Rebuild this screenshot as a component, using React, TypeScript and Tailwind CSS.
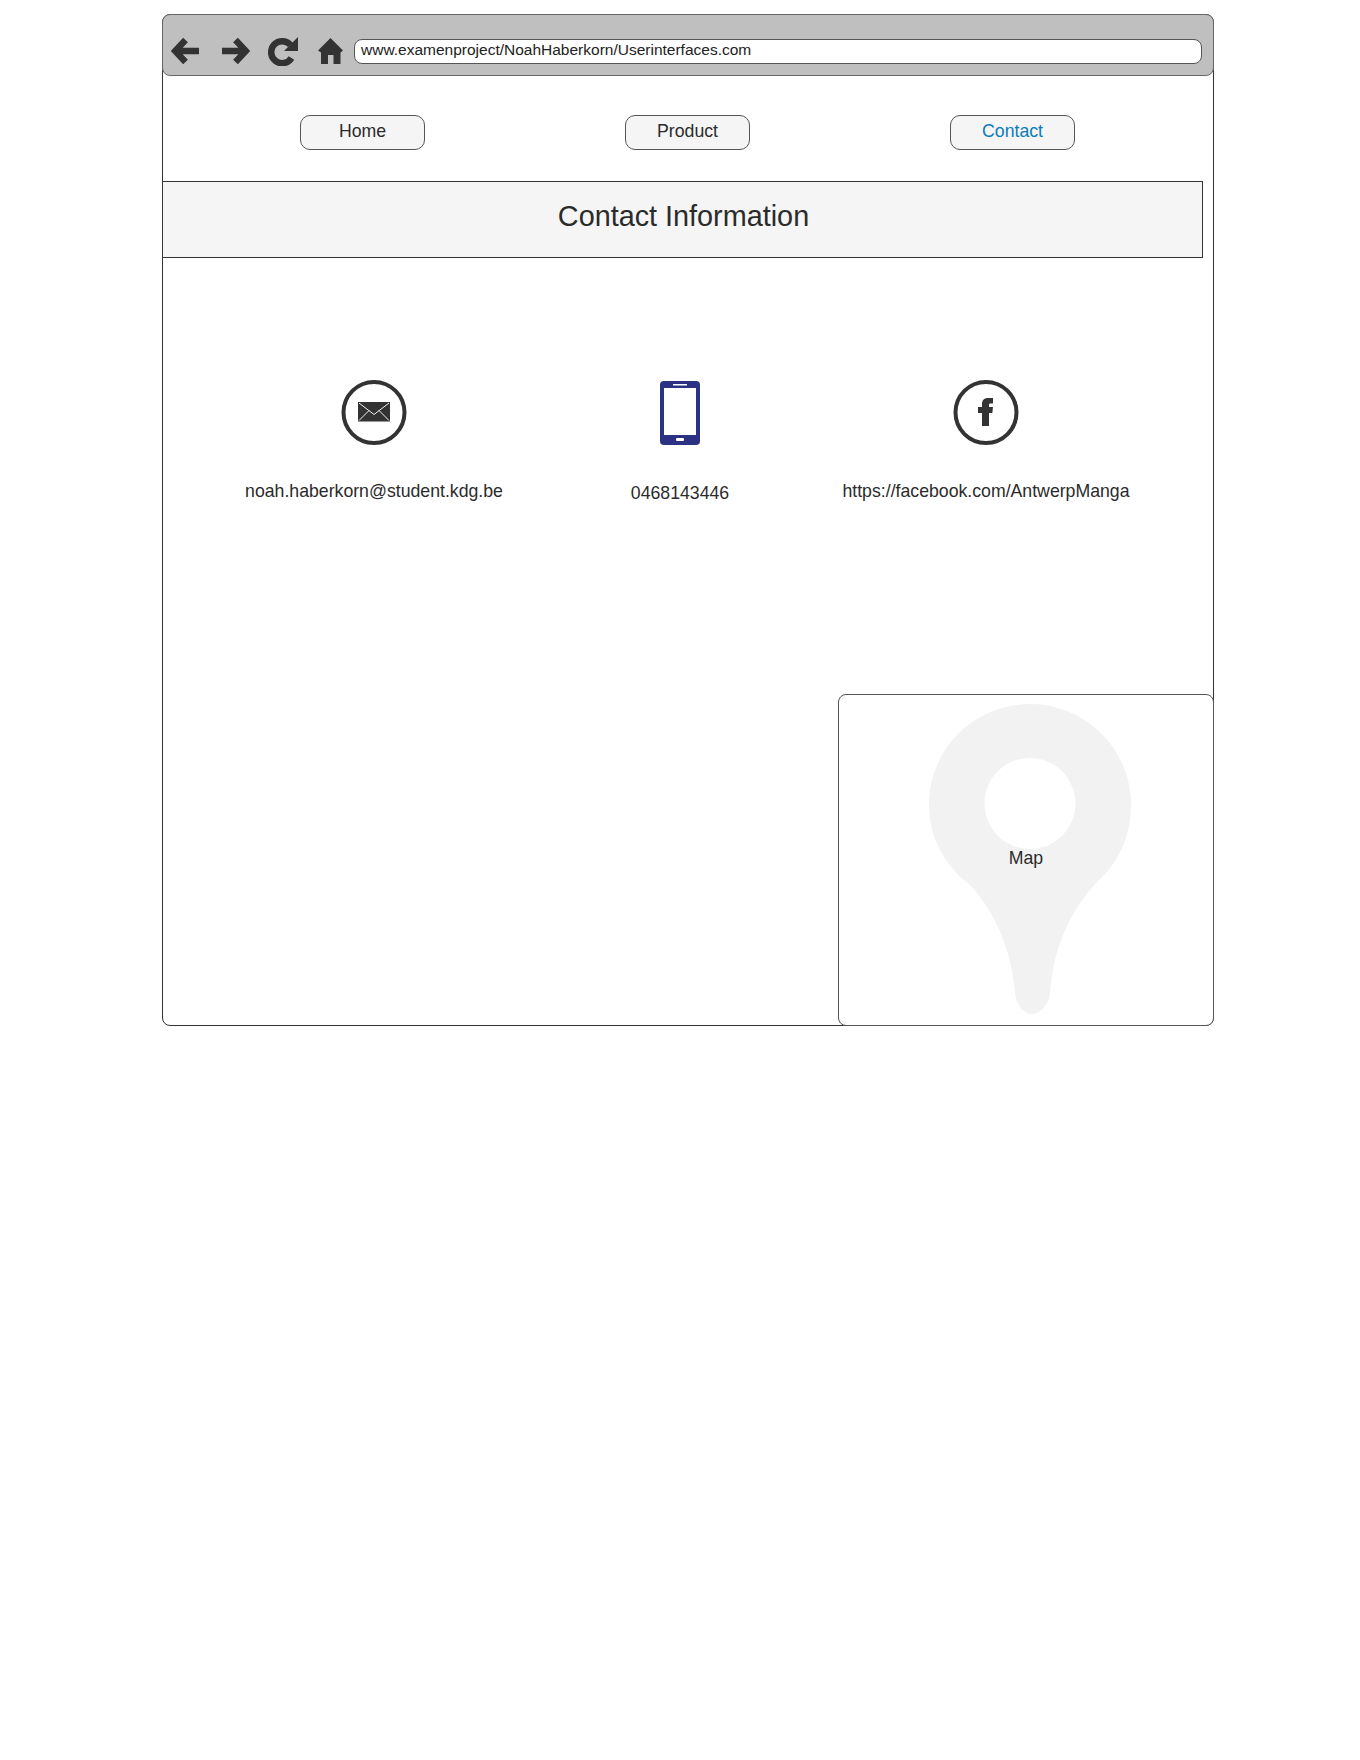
import React from 'react';

const navItems = [
  { label: 'Home', color: 'text-[#2b2b2b]' },
  { label: 'Product', color: 'text-[#2b2b2b]' },
  { label: 'Contact', color: 'text-[#0c7cba]' },
];

function BackIcon() {
  return (
    <svg width="28" height="28" viewBox="0 0 28 28" className="shrink-0">
      <path d="M28 14H6M14.500 3 4.200 14 14.500 25" fill="none" stroke="#333333" strokeWidth="6.500" />
    </svg>
  );
}

function ForwardIcon() {
  return (
    <svg width="28" height="28" viewBox="0 0 28 28" className="shrink-0">
      <path d="M0 14H22M13.500 3 23.800 14 13.500 25" fill="none" stroke="#333333" strokeWidth="6.500" />
    </svg>
  );
}

function ReloadIcon() {
  return (
    <svg width="30" height="30" viewBox="0 0 30 30" className="shrink-0">
      <path d="M22.500 9A11 11 0 1 0 23.500 22" fill="none" stroke="#333333" strokeWidth="6.500" />
      <path d="M30 1V15H16z" fill="#333333" />
    </svg>
  );
}

function HomeIcon() {
  return (
    <svg width="25" height="26" viewBox="0 0 25 26" className="shrink-0">
      <path d="M12.500 0 25 12.500 22.500 14.500V26H15.500V17H10V26H3V14.500L0 12.500z" fill="#333333" />
    </svg>
  );
}

function MailIcon() {
  return (
    <svg width="66" height="66" viewBox="0 0 66 66">
      <circle cx="33" cy="32.500" r="30.500" fill="none" stroke="#333333" strokeWidth="4" />
      <rect x="17" y="22" width="32" height="19.500" fill="#333333" />
      <path d="M18 23 33 34.500 48 23M18 40.500 28 30.500M48 40.500 38 30.500" fill="none" stroke="#f2f2f2" strokeWidth="1" />
    </svg>
  );
}

function PhoneIcon() {
  return (
    <svg width="40" height="64" viewBox="0 0 40 64">
      <rect width="40" height="64" rx="4" fill="#2b3284" />
      <rect x="4" y="7" width="32" height="47" fill="#ffffff" />
      <rect x="13" y="3" width="14" height="1.500" fill="#ffffff" />
      <rect x="16" y="57" width="8" height="3" rx="1" fill="#ffffff" />
    </svg>
  );
}

function FacebookIcon() {
  return (
    <svg width="66" height="66" viewBox="0 0 66 66">
      <circle cx="33" cy="32.500" r="30.500" fill="none" stroke="#333333" strokeWidth="4" />
      <path d="M29 46V33H25V27H29V24C29 20 31.500 18 35 18H40V23.500H37.500C36.300 23.500 36 24 36 25V27H40L39.300 33H36V46z" fill="#333333" />
    </svg>
  );
}

function MapPin() {
  return (
    <svg width="202" height="310" viewBox="0 0 202 310" className="absolute left-[90px] top-[9px]">
      <path
        fillRule="evenodd"
        fill="#f2f2f2"
        d="M101 0C45 0 0 45 0 101C0 133 15 161 41 181C73 215 84 260 86 289C87 301 95 310 103 310C111 310 120 301 121 289C124 250 137 210 170 176C190 158 202 131 202 101C202 45 157 0 101 0ZM101 54A45.500 45.500 0 1 1 100.900 54Z"
      />
    </svg>
  );
}

function ContactColumn({ icon, text, className }: { icon: React.ReactNode; text: string; className: string }) {
  return (
    <div className={`flex flex-col items-center whitespace-nowrap ${className}`}>
      <div className="flex h-[66px] items-center">{icon}</div>
      <span className="text-[17.700px] leading-5 text-[#2b2b2b]">{text}</span>
    </div>
  );
}

export default function App() {
  return (
    <div className="min-h-[1760px] bg-white pl-[162px] pt-[14px] font-['Liberation_Sans',Arial,sans-serif]">
      <div className="flex h-[1012px] w-[1052px] flex-col rounded-lg border border-[#333333]">
        {/* browser bar */}
        <div className="-mx-px -mt-px flex h-[62px] items-center rounded-lg border border-[#666666] bg-[#bfbfbf] pl-2 pr-[11px] pt-3">
          <BackIcon />
          <div className="ml-[23px]">
            <ForwardIcon />
          </div>
          <div className="ml-[18px]">
            <ReloadIcon />
          </div>
          <div className="ml-5">
            <HomeIcon />
          </div>
          <div className="ml-[11px] flex h-[25px] flex-1 items-center rounded-lg border border-[#555555] bg-white pb-[3px] pl-[6px] text-[15.500px] text-[#222222]">
            www.examenproject/NoahHaberkorn/Userinterfaces.com
          </div>
        </div>

        {/* nav */}
        <div className="mt-[39px] flex gap-[200px] pl-[137px]">
          {navItems.map((item) => (
            <div
              key={item.label}
              className={`flex h-[35px] w-[125px] items-center justify-center rounded-[10px] border border-[#555555] bg-[#f5f5f5] pb-[3px] text-[17.700px] ${item.color}`}
            >
              {item.label}
            </div>
          ))}
        </div>

        {/* title */}
        <div className="mr-[10px] mt-[31px] flex h-[77px] items-center justify-center border-y border-r border-[#333333] bg-[#f5f5f5] pb-[5px] pl-[2px] text-[28.800px] text-[#2b2b2b]">
          Contact Information
        </div>

        {/* contact info */}
        <div className="mt-[122px] flex">
          <ContactColumn icon={<MailIcon />} text="noah.haberkorn@student.kdg.be" className="ml-[82px] w-[258px] gap-[35px]" />
          <ContactColumn icon={<PhoneIcon />} text="0468143446" className="ml-[127px] w-[100px] gap-[37px]" />
          <ContactColumn icon={<FacebookIcon />} text="https://facebook.com/AntwerpManga" className="ml-28 w-[288px] gap-[35px]" />
        </div>

        {/* map */}
        <div className="relative -mb-px -mr-px mt-auto h-[332px] w-[376px] self-end rounded-lg border border-[#555555] bg-white">
          <MapPin />
          <span className="absolute inset-x-0 top-[150px] text-center text-[17.700px] text-[#2b2b2b]">Map</span>
        </div>
      </div>
    </div>
  );
}
